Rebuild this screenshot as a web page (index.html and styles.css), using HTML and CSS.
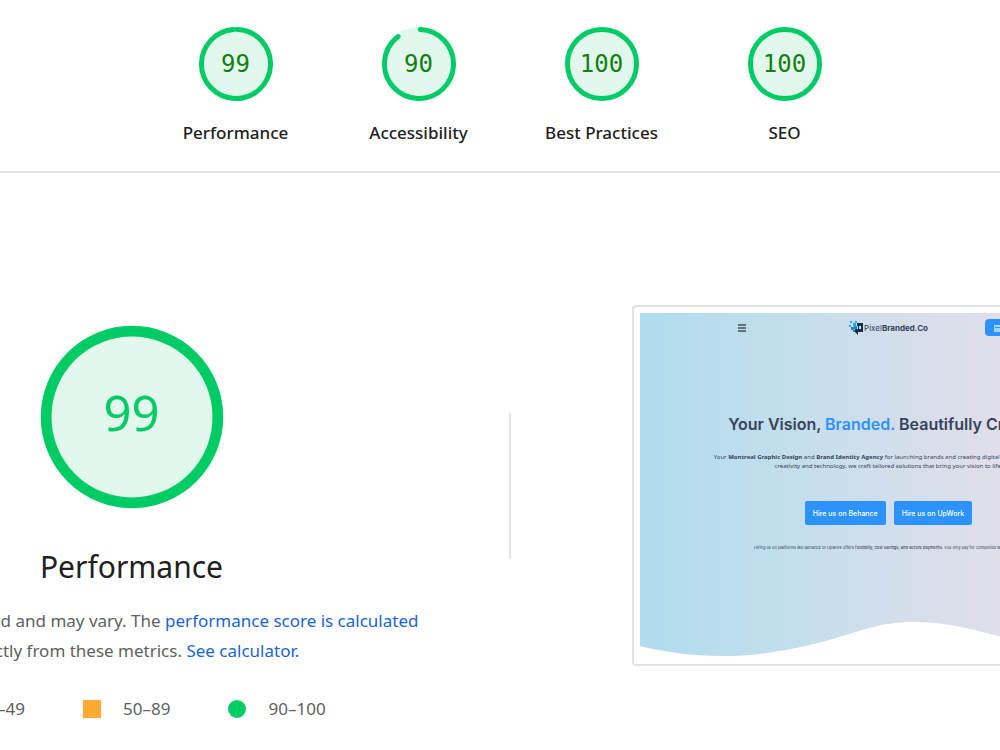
FILE: index.html
```
<!DOCTYPE html>
<html lang="en">
<head>
  <meta charset="UTF-8" />
  <meta name="viewport" content="width=device-width, initial-scale=1.0" />
  <title>Performance Report</title>
  <link rel="stylesheet" href="styles.css">
</head>
<body>
  <main class="report">
    <nav class="scores">
      <a class="score" href="#performance">
        <span class="gauge">
          <svg viewBox="0 0 120 120" aria-hidden="true">
            <circle class="gauge-base" cx="60" cy="60" r="56" />
            <circle class="gauge-arc" cx="60" cy="60" r="56" stroke-dasharray="345 352" transform="rotate(-88 60 60)" />
          </svg>
          <span class="gauge-value">99</span>
        </span>
        <span class="score-label">Performance</span>
      </a>
      <a class="score" href="#accessibility">
        <span class="gauge">
          <svg viewBox="0 0 120 120" aria-hidden="true">
            <circle class="gauge-base" cx="60" cy="60" r="56" />
            <circle class="gauge-arc" cx="60" cy="60" r="56" stroke-dasharray="313 352" transform="rotate(-88 60 60)" />
          </svg>
          <span class="gauge-value">90</span>
        </span>
        <span class="score-label">Accessibility</span>
      </a>
      <a class="score" href="#best-practices">
        <span class="gauge">
          <svg viewBox="0 0 120 120" aria-hidden="true">
            <circle class="gauge-base" cx="60" cy="60" r="56" />
            <circle class="gauge-arc" cx="60" cy="60" r="56" />
          </svg>
          <span class="gauge-value">100</span>
        </span>
        <span class="score-label">Best Practices</span>
      </a>
      <a class="score" href="#seo">
        <span class="gauge">
          <svg viewBox="0 0 120 120" aria-hidden="true">
            <circle class="gauge-base" cx="60" cy="60" r="56" />
            <circle class="gauge-arc" cx="60" cy="60" r="56" />
          </svg>
          <span class="gauge-value">100</span>
        </span>
        <span class="score-label">SEO</span>
      </a>
    </nav>

    <section class="category" id="performance">
      <div class="summary">
        <div class="gauge gauge-large">
          <svg viewBox="0 0 120 120" aria-hidden="true">
            <circle class="gauge-base" cx="60" cy="60" r="56" />
            <circle class="gauge-arc" cx="60" cy="60" r="56" />
          </svg>
          <span class="gauge-value">99</span>
        </div>
        <h1>Performance</h1>
        <p class="description">Values are estimated and may vary. The <a href="#score">performance score is calculated</a><br>directly from these metrics. <a href="#calculator">See calculator.</a></p>
        <ul class="scale">
          <li><svg class="mark" viewBox="0 0 18 18" aria-hidden="true"><path d="M9 0 18 18H0z" fill="#ff3333" /></svg>0–49</li>
          <li><svg class="mark" viewBox="0 0 18 18" aria-hidden="true"><path d="M0 0h18v18H0z" fill="#ffaa33" /></svg>50–89</li>
          <li><svg class="mark" viewBox="0 0 18 18" aria-hidden="true"><circle cx="9" cy="9" r="9" fill="#00cc66" /></svg>90–100</li>
        </ul>
      </div>

      <div class="divider"></div>

      <div class="frame">
        <div class="site">
          <div class="site-bar">
            <button class="menu" aria-label="Menu">
              <svg viewBox="0 0 8 8" aria-hidden="true"><path d="M0 1h8M0 4h8M0 7h8" stroke="#42505f" stroke-width="1.4" /></svg>
            </button>
            <div class="logo">
              <svg viewBox="0 0 14 14" aria-hidden="true">
                <path d="M1 0h2v2H1zM4 2h3v3H4zM0 4h2v2H0zM6 0h2v2H6z" fill="#2aa7e8" />
                <path d="M2 6h3v3H2zM5 5h3v3H5zM4 9h3v2H4z" fill="#1b85c8" />
                <path d="M8 2h6v9H9v3L6 11V8h3V5H8zM10 5v3h2V5z" fill="#17314c" fill-rule="evenodd" />
              </svg>
              <span>Pixel<b>Branded.Co</b></span>
            </div>
            <button class="book">
              <svg viewBox="0 0 8 8" aria-hidden="true"><path d="M0 1h8v7H0zM1 3v1h6V3z" fill="#a6d5ff" fill-rule="evenodd" /></svg>
              Book a call
            </button>
          </div>
          <h2>Your Vision, <span>Branded.</span> Beautifully Crafted.</h2>
          <p class="intro">Your <b>Montreal Graphic Design</b> and <b>Brand Identity Agency</b> for launching brands and creating digital experiences. Blending<br>creativity and technology, we craft tailored solutions that bring your vision to life.</p>
          <div class="hire">
            <button>Hire us on Behance</button>
            <button>Hire us on UpWork</button>
          </div>
          <p class="note">Hiring us on platforms like Behance or Upwork offers <b>flexibility, cost savings, and secure payments</b>. You only pay for completed work, always.</p>
          <svg class="wave" viewBox="0 0 496 40" preserveAspectRatio="none" aria-hidden="true">
            <path d="M0 28C25 34 50 38 82 38C135 38 180 25 215 14C240 6 254 4 273 4C305 4 335 12 360 19C400 30 450 34 496 24V40H0z" fill="#fff" />
          </svg>
        </div>
      </div>
    </section>
  </main>
</body>
</html>
```
FILE: styles.css
```
* {
  box-sizing: border-box;
}
body {
  margin: 0;
  font-family: 'Noto Sans', 'Open Sans', sans-serif;
  font-size: 17px;
  color: #212121;
  background: #fff;
  overflow: hidden;
}
a {
  color: #1a66d0;
  text-decoration: none;
}
/* the report is wider than the window on both sides */
.report {
  margin: 0 -266px 0 -246px;
}

.scores {
  display: grid;
  grid-template-columns: repeat(4, 183px);
  justify-content: center;
  padding: 27px 0 26px;
  border-bottom: 2px solid #e2e2e2;
}
.score {
  display: flex;
  flex-direction: column;
  align-items: center;
  gap: 20px;
  color: #212121;
}
.score-label {
  font-weight: 500;
  line-height: 24px;
}
.gauge {
  display: grid;
  place-items: center;
  width: 74px;
  height: 74px;
}
.gauge svg,
.gauge-value {
  grid-area: 1 / 1;
}
.gauge svg {
  width: 100%;
  height: 100%;
}
.gauge-base {
  fill: #e3f8ec;
  stroke: #e3f8ec;
  stroke-width: 8;
}
.gauge-arc {
  fill: none;
  stroke: #00cc66;
  stroke-width: 8;
  stroke-linecap: round;
}
.gauge-value {
  font-family: 'DejaVu Sans Mono', monospace;
  font-size: 24px;
  line-height: 24px;
  color: #118011;
}
.gauge-large {
  width: 184px;
  height: 184px;
}
.gauge-large circle {
  stroke-width: 7;
}
.gauge-large .gauge-value {
  font-family: 'Noto Sans', sans-serif;
  font-size: 49px;
  line-height: 60px;
  padding-bottom: 10px;
  color: #00cc66;
}

.category {
  display: grid;
  grid-template-columns: 1fr 2px 1fr;
  align-items: center;
  padding-top: 77px;
}
.summary {
  display: flex;
  flex-direction: column;
  align-items: center;
  padding-top: 75px;
}
h1 {
  margin: 36px 0 17px;
  font-size: 30px;
  font-weight: 400;
  line-height: 44px;
}
.description {
  margin: 0;
  line-height: 30px;
  text-align: center;
  color: #616161;
  white-space: nowrap;
}
.scale {
  display: flex;
  gap: 58px;
  margin: 31px 0 0;
  padding: 0 0 0 10px;
  line-height: 24px;
  list-style: none;
  color: #616161;
}
.scale li {
  display: flex;
  align-items: center;
  gap: 22px;
}
.mark {
  width: 18px;
  height: 18px;
}
.divider {
  height: 146px;
  background: #e2e2e2;
}

.frame {
  justify-self: center;
  width: 514px;
  padding: 6px;
  border: 2px solid #e2e2e2;
  border-radius: 4px;
}
.site {
  position: relative;
  display: flex;
  flex-direction: column;
  align-items: center;
  padding-bottom: 106px;
  font-family: Inter, sans-serif;
  color: #36435a;
  background: linear-gradient(90deg, #b0dcee 0%, #c3deed 30%, #d5deeb 54%, #dfdfeb 70%, #e6dce8 100%);
}
.site button {
  padding: 0;
  border: 0;
  font-family: inherit;
  color: #fff;
  background: #2b93fb;
}
.site-bar {
  display: grid;
  grid-template-columns: 1fr auto 1fr;
  align-items: center;
  width: 302px;
  padding-top: 6px;
}
.site .menu {
  width: 8px;
  height: 8px;
  background: none;
}
.menu svg {
  display: block;
}
.logo {
  display: flex;
  align-items: center;
  gap: 1px;
  font-size: 8px;
  line-height: 14px;
}
.logo svg {
  width: 14px;
  height: 14px;
}
.site .book {
  display: flex;
  align-items: center;
  justify-self: end;
  gap: 3px;
  height: 17px;
  padding: 0 4px 0 9px;
  border-radius: 4px;
  font-size: 6px;
}
.book svg {
  width: 8px;
  height: 8px;
}
.site h2 {
  margin: 76px 0 0;
  font-size: 16px;
  font-weight: 600;
  line-height: 24px;
}
.site h2 span {
  color: #2b93fb;
}
.intro {
  margin: 17px 0 0;
  font-family: 'Noto Sans', sans-serif;
  font-size: 6px;
  line-height: 9px;
  text-align: center;
  white-space: nowrap;
}
.hire {
  display: flex;
  gap: 8px;
  margin-top: 30px;
}
.site .hire button {
  height: 24px;
  padding: 0 8px;
  border-radius: 2px;
  font-size: 7px;
  font-weight: 500;
}
.note {
  margin: 19px 0 0;
  font-size: 4px;
  line-height: 8px;
  white-space: nowrap;
}
.note b {
  font-weight: 500;
}
.wave {
  position: absolute;
  left: 0;
  bottom: 0;
  width: 100%;
  height: 40px;
}
```
